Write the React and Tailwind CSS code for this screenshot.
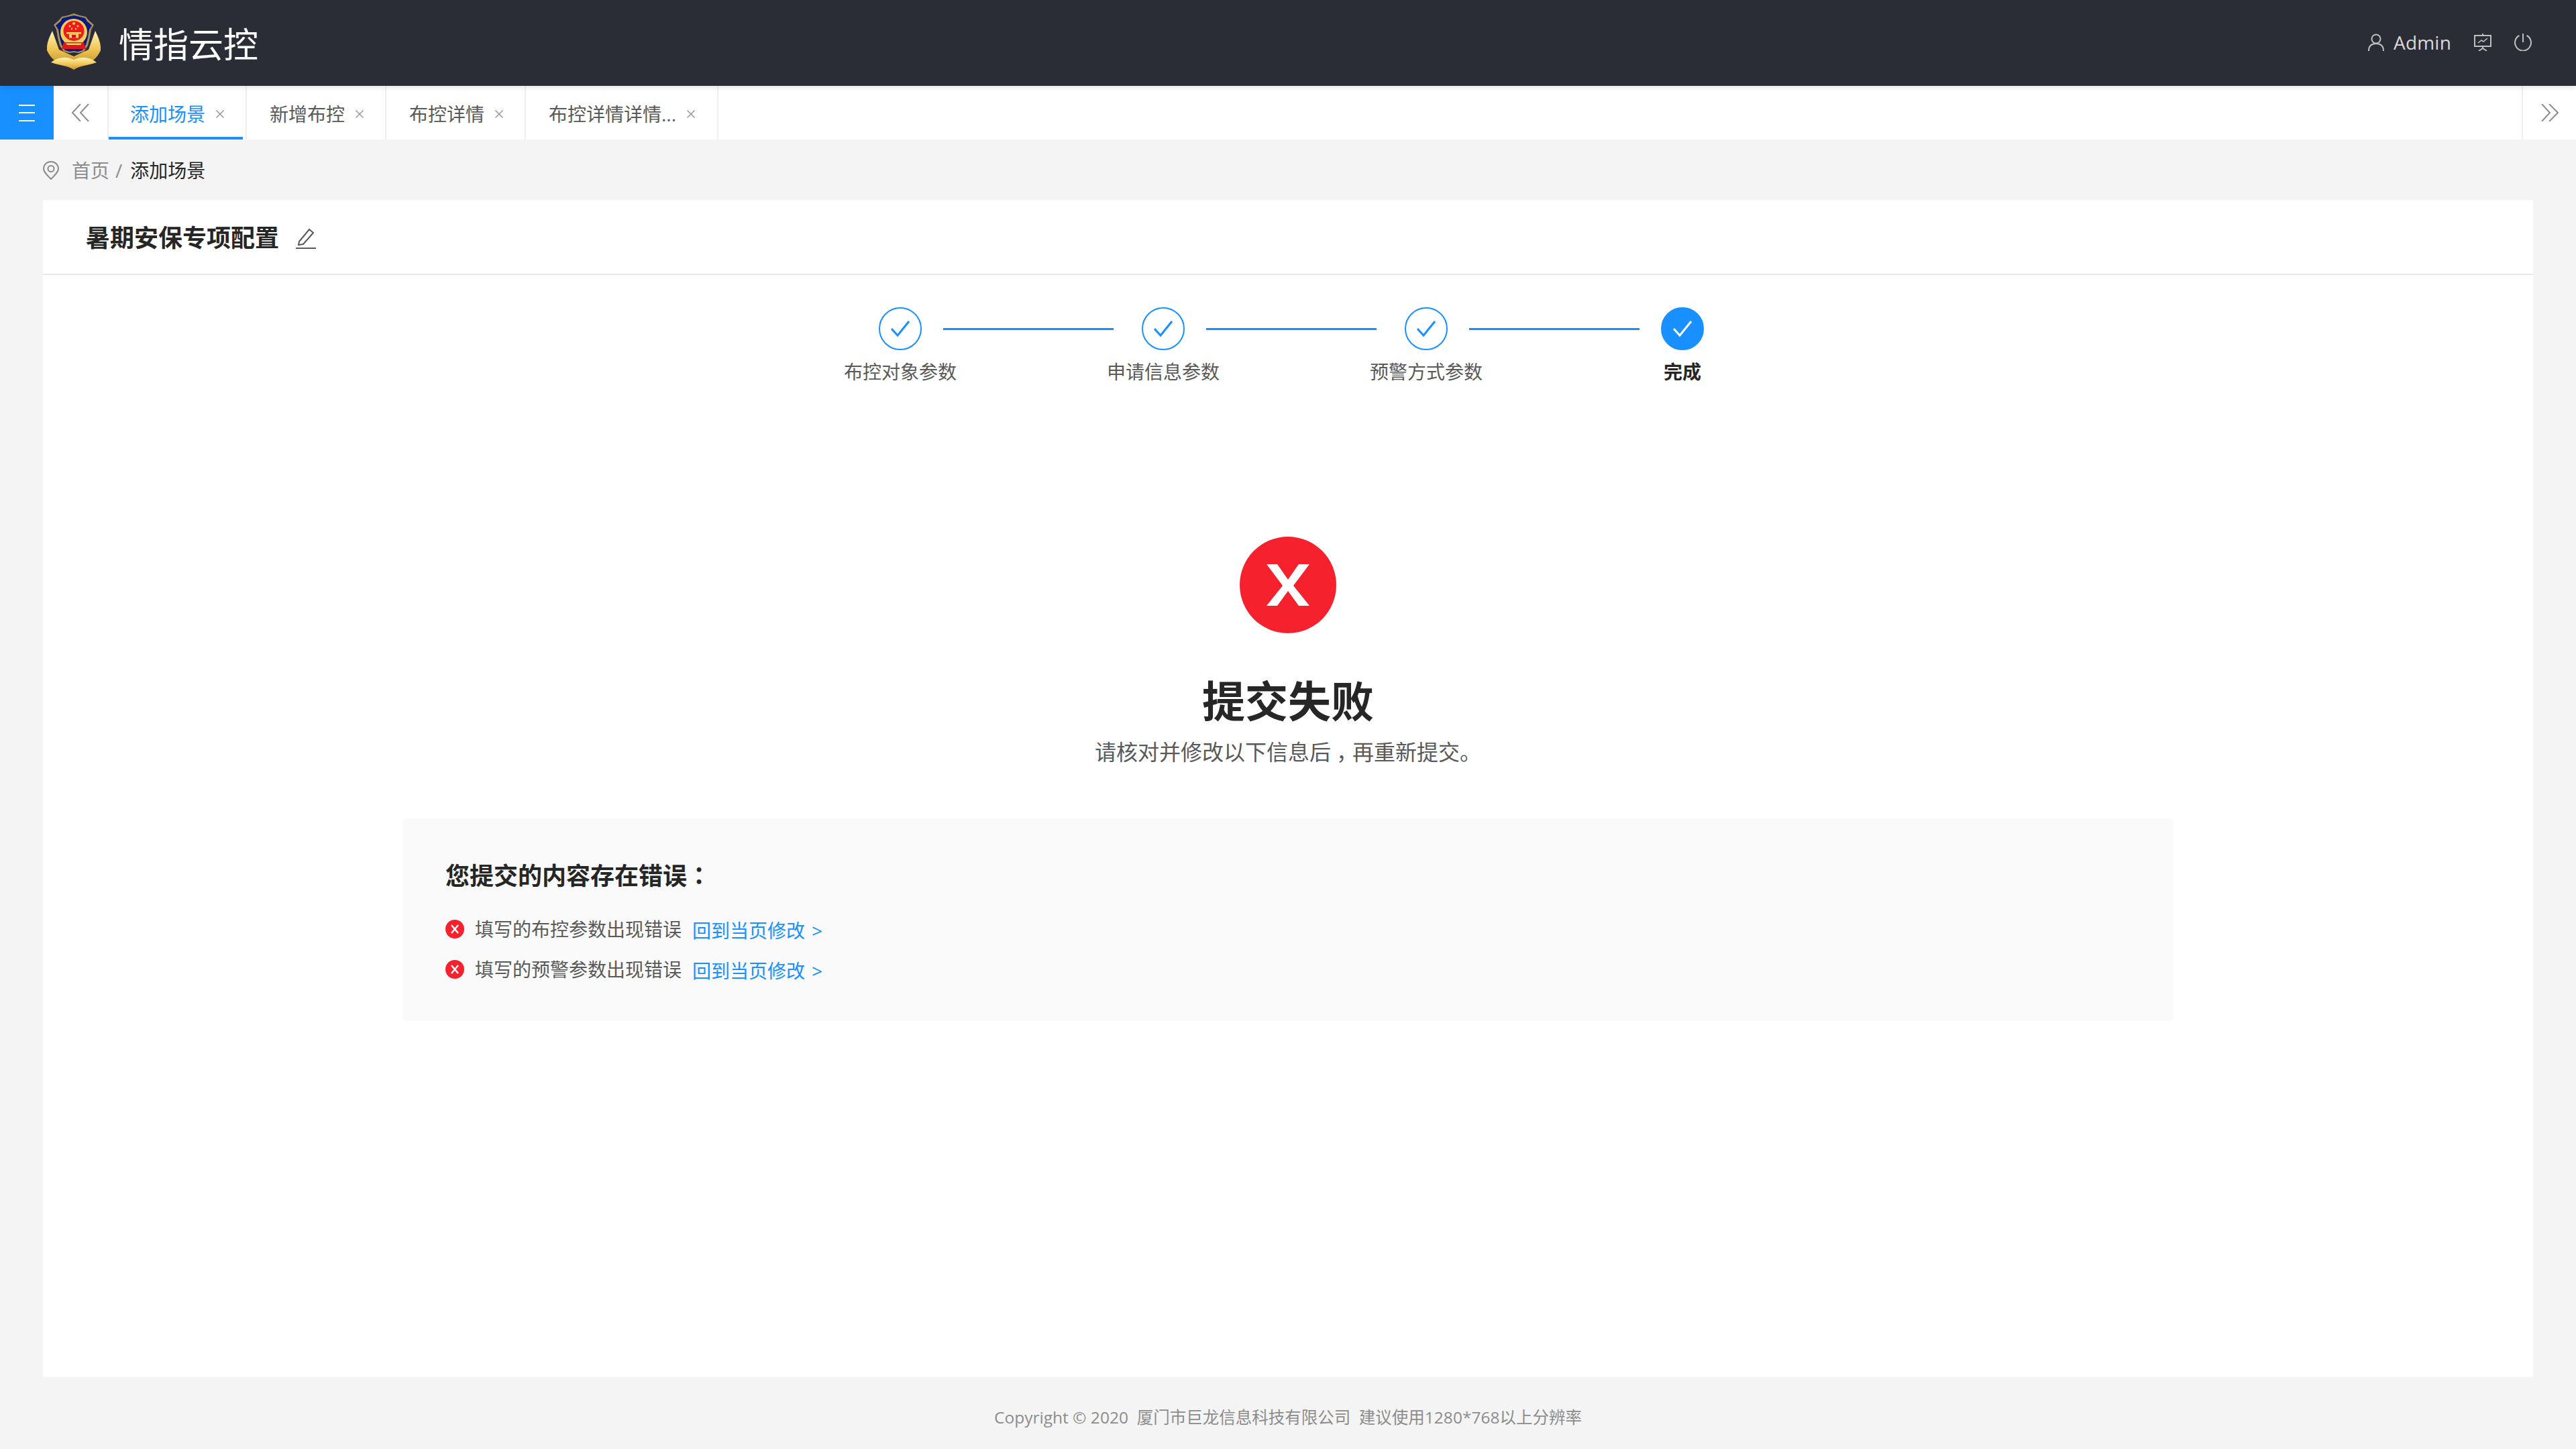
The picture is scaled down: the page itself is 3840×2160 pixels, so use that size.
import React from "react";

const FONT = "font-['Open_Sans','Noto_Sans_CJK_SC','Noto_Sans',sans-serif]";

function Logo() {
  return (
    <svg width="80" height="84" viewBox="0 0 80 84" className="shrink-0">
      <defs>
        <linearGradient id="gold" x1="0" y1="0" x2="0" y2="1">
          <stop offset="0" stopColor="#fff3b0" />
          <stop offset="0.55" stopColor="#efc655" />
          <stop offset="1" stopColor="#c9932b" />
        </linearGradient>
      </defs>
      <path d="M8 26 C3 36 -1 46 0 55 C3 62 8 68 14 72 L40 76 L66 72 C72 68 77 62 80 55 C81 46 77 36 72 26 L62 54 L40 64 L18 54 Z" fill="url(#gold)" />
      <path d="M6 73 C18 63 32 65 40 69 C48 65 62 63 74 73 C62 78 50 77 40 84 C30 77 18 78 6 73 Z" fill="url(#gold)" />
      <path d="M40 0 L49 3 L58 5 L62 10 L70 17 L66 24 L64 36 L61 48 L55 57 L47 59 L40 58 L33 59 L25 57 L19 48 L16 36 L14 24 L10 17 L18 10 L22 5 L31 3 Z" fill="#a8905a" />
      <path d="M40 3 L49 5 L57 7 L60 12 L67 18 L63 24 L61 36 L58 47 L53 55 L46 57 L40 56 L34 57 L27 55 L22 47 L19 36 L17 24 L13 18 L20 12 L23 7 L31 5 Z" fill="#0b1a7c" />
      <ellipse cx="40" cy="28" rx="20" ry="20" fill="#f4cf5c" />
      <ellipse cx="40" cy="26" rx="15.5" ry="15" fill="#f01c1c" />
      <path d="M25 43 L55 43 L58 53 L22 53 Z" fill="#e0161c" />
      <path d="M28 44.5 L52 44.5 L50 47 L30 47 Z" fill="#f6d564" />
      <rect x="29" y="28" width="22" height="2.5" fill="#f6d564" />
      <rect x="33" y="30.5" width="14" height="6" fill="#f6d564" />
      <rect x="37" y="32" width="6" height="4.5" fill="#d0161c" />
      <circle cx="40" cy="15" r="2" fill="#f6d564" />
      <circle cx="34" cy="19" r="1.4" fill="#f6d564" />
      <circle cx="46" cy="19" r="1.4" fill="#f6d564" />
      <circle cx="37" cy="23" r="1.2" fill="#f6d564" />
      <circle cx="43" cy="23" r="1.2" fill="#f6d564" />
    </svg>
  );
}

function Chevrons({ dir }) {
  return (
    <svg width="26" height="26" viewBox="0 0 26 26" fill="none" stroke="#8c8c8c" strokeWidth="2">
      {dir === "left" ? (
        <>
          <path d="M13 0 L1 13 L13 26" />
          <path d="M25 0 L13 13 L25 26" />
        </>
      ) : (
        <>
          <path d="M1 0 L13 13 L1 26" />
          <path d="M12 0 L25 13 L12 26" />
        </>
      )}
    </svg>
  );
}

function CloseX() {
  return (
    <svg width="12" height="12" viewBox="0 0 12 12" stroke="#8c8c8c" strokeWidth="1.2" className="shrink-0">
      <path d="M0.5 0.5 L11.5 11.5 M11.5 0.5 L0.5 11.5" />
    </svg>
  );
}

function Tab({ label, active, w }) {
  return (
    <div className={`relative h-full flex items-center pl-[32px] pt-[3px] border-r-2 border-[#eeeeee] ${w}`}>
      <span className={`text-[28px] leading-none whitespace-nowrap ${active ? "text-[#1890ff]" : "text-[#595959]"}`}>{label}</span>
      <span className="ml-[16px]"><CloseX /></span>
      {active && <div className="absolute left-0 bottom-0 w-[200px] h-[4px] bg-[#1890ff]" />}
    </div>
  );
}

function Step({ label, done }) {
  return (
    <div className="w-[128px] flex flex-col items-center">
      <div className={`w-[64px] h-[64px] rounded-full border-2 border-[#1890ff] flex items-center justify-center ${done ? "bg-[#1890ff]" : "bg-white"}`}>
        <svg width="28" height="24" viewBox="0 0 28 24" fill="none" stroke={done ? "#ffffff" : "#1890ff"} strokeWidth="3">
          <path d="M1 12 L10 22 L27 1" />
        </svg>
      </div>
      <div className={`mt-[12px] text-[28px] leading-[40px] whitespace-nowrap ${done ? "font-bold text-[#262626]" : "text-[#595959]"}`}>{label}</div>
    </div>
  );
}

function Connector({ last }) {
  return <div className={`w-[254px] h-[3px] bg-[#1890ff] mt-[31px] ${last ? "" : "mr-[10px]"}`} />;
}

function ErrorRow({ text }) {
  return (
    <div className="flex items-center h-[60px]">
      <svg width="28" height="28" viewBox="0 0 28 28" className="shrink-0">
        <circle cx="14" cy="14" r="14" fill="#f5222d" />
        <path d="M9 8 L19 20 M19 8 L9 20" stroke="#fff" strokeWidth="2.4" />
      </svg>
      <span className="ml-[16px] text-[28px] leading-none text-[#595959] whitespace-nowrap">{text}</span>
      <span className="ml-[16px] mt-[4px] text-[28px] leading-none text-[#1890ff] whitespace-nowrap">
        回到当页修改<span className="ml-[10px]">&gt;</span>
      </span>
    </div>
  );
}

export default function App() {
  return (
    <div className={`w-[3840px] h-[2160px] flex flex-col bg-[#f4f4f4] overflow-hidden ${FONT}`}>
      <header className="h-[128px] shrink-0 bg-[#2a2d36] flex items-center pl-[70px] pr-[66px] z-10 shadow-[0_2px_8px_rgba(0,0,0,0.12)]">
        <div className="-mt-[5px]"><Logo /></div>
        <div className="ml-[27px] mt-[3px] text-[52px] leading-none text-white whitespace-nowrap">情指云控</div>
        <div className="ml-auto flex items-center text-[#d9d9d9] -mt-[2px]">
          <svg width="24" height="26" viewBox="0 0 24 26" fill="none" stroke="#bfbfbf" strokeWidth="2">
            <circle cx="12" cy="8" r="6.5" />
            <path d="M1 26 C1 18 6 15 12 15 C18 15 23 18 23 26" />
          </svg>
          <span className="ml-[14px] text-[28px] leading-none tracking-[0.2px]">Admin</span>
          <svg className="ml-[34px]" width="26" height="26" viewBox="0 0 26 26" fill="none" stroke="#bfbfbf" strokeWidth="2">
            <path d="M13 0 L13 3" />
            <rect x="1" y="3" width="24" height="16" />
            <path d="M6 14 L11 10 L14 12 L20 7" strokeWidth="1.6" />
            <path d="M13 19 L13 22 M7 26 L13 22 L19 26" />
          </svg>
          <svg className="ml-[34px]" width="26" height="26" viewBox="0 0 26 26" fill="none" stroke="#bfbfbf" strokeWidth="2">
            <path d="M7.5 3 A12 12 0 1 0 18.5 3" />
            <path d="M13 0 L13 13" />
          </svg>
        </div>
      </header>

      <nav className="h-[80px] shrink-0 bg-white flex items-stretch">
        <div className="w-[80px] bg-[#1890ff] flex flex-col items-center justify-center gap-[9.5px]">
          <div className="w-[24px] h-[2px] bg-white" />
          <div className="w-[24px] h-[2px] bg-white" />
          <div className="w-[24px] h-[2px] bg-white" />
        </div>
        <div className="w-[82px] border-r-2 border-[#eeeeee] flex items-center justify-center">
          <Chevrons dir="left" />
        </div>
        <Tab label="添加场景" active w="w-[206px]" />
        <Tab label="新增布控" w="w-[208px] pl-[34px]" />
        <Tab label="布控详情" w="w-[208px] pl-[34px]" />
        <Tab label="布控详情详情..." w="w-[287px] pl-[34px]" />
        <div className="ml-auto w-[81px] border-l-2 border-[#eeeeee] flex items-center justify-center">
          <Chevrons dir="right" />
        </div>
      </nav>

      <div className="h-[90px] shrink-0 flex items-center pl-[64px] pt-[1px] text-[28px] leading-none">
        <svg width="24" height="28" viewBox="0 0 24 28" fill="none" stroke="#8c8c8c" strokeWidth="2">
          <path d="M12 27 C6 21 1 16 1 11.5 C1 5.5 6 1 12 1 C18 1 23 5.5 23 11.5 C23 16 18 21 12 27 Z" />
          <circle cx="12" cy="11.5" r="4.5" />
        </svg>
        <span className="ml-[19px] text-[#8c8c8c]">首页</span>
        <span className="ml-[9px] text-[#8c8c8c]">/</span>
        <span className="ml-[12px] text-[#262626]">添加场景</span>
      </div>

      <main className="mx-[64px] h-[1755px] shrink-0 bg-white flex flex-col">
        <div className="h-[112px] shrink-0 border-b-2 border-[#e8e8e8] flex items-center pl-[64px] pt-[3px]">
          <span className="text-[36px] leading-none font-bold text-[#262626] whitespace-nowrap">暑期安保专项配置</span>
          <svg className="ml-[24px]" width="32" height="32" viewBox="0 0 32 32" fill="none" stroke="#595959" strokeWidth="2">
            <path d="M6 21 L21 3 L27 8 L12 25 L5 26 Z" />
            <path d="M1 31 L31 31" />
          </svg>
        </div>

        <div className="flex flex-col items-center pt-[48px]">
          <div className="flex justify-center pl-[10px]">
            <Step label="布控对象参数" />
            <Connector />
            <Step label="申请信息参数" />
            <Connector />
            <Step label="预警方式参数" />
            <Connector last />
            <Step label="完成" done />
          </div>

          <svg className="mt-[226px]" width="144" height="144" viewBox="0 0 144 144">
            <circle cx="72" cy="72" r="72" fill="#f5222d" />
            <path d="M40 41 H56 L72 64 L88 41 H104 L80 73 L104 103 H88 L72 81 L56 103 H40 L64 73 Z" fill="#fff" />
          </svg>
          <h1 className="mt-[56px] text-[64px] leading-[90px] font-bold text-[#262626] whitespace-nowrap">提交失败</h1>
          <p className="mt-[8px] text-[32px] leading-[46px] text-[#595959] whitespace-nowrap">
            请核对并修改以下信息后<span className="px-[8px] [font-feature-settings:'halt']">，</span>再重新提交。
          </p>

          <section className="mt-[76px] w-[2640px] h-[302px] bg-[#fafafa] rounded-[4px] px-[64px] pt-[58px] self-center">
            <h2 className="text-[36px] leading-[50px] font-bold text-[#262626] whitespace-nowrap">
              您提交的内容存在错误<span className="font-['Noto_Sans_CJK_TC',sans-serif]">：</span>
            </h2>
            <div className="mt-[24px]">
              <ErrorRow text="填写的布控参数出现错误" />
              <ErrorRow text="填写的预警参数出现错误" />
            </div>
          </section>
        </div>
      </main>

      <footer className="flex-1 flex items-center justify-center pt-[14px] text-[24.5px] leading-none text-[#8c8c8c] whitespace-pre">
        Copyright © 2020  厦门市巨龙信息科技有限公司  建议使用1280*768以上分辨率
      </footer>
    </div>
  );
}
